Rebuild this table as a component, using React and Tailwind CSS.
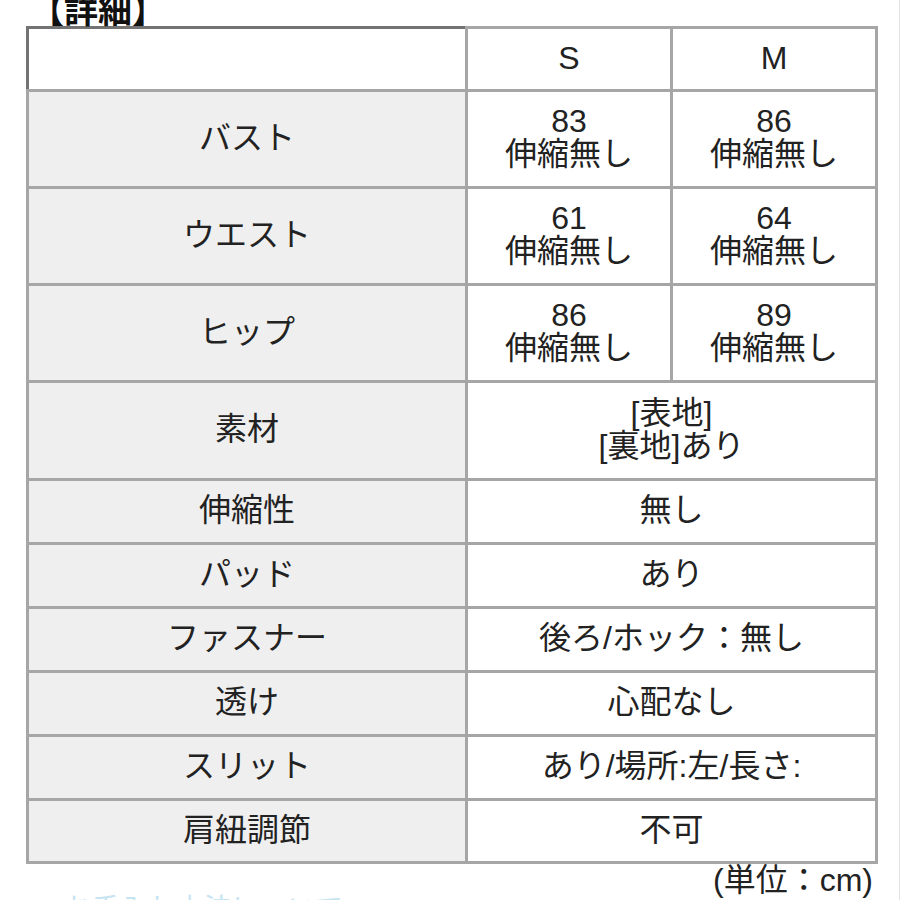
import React from "react";

const ROWS = [
  { label: "バスト", s: ["83", "伸縮無し"], m: ["86", "伸縮無し"], h: "h-[97px]" },
  { label: "ウエスト", s: ["61", "伸縮無し"], m: ["64", "伸縮無し"], h: "h-[97px]" },
  { label: "ヒップ", s: ["86", "伸縮無し"], m: ["89", "伸縮無し"], h: "h-[97px]" },
  { label: "素材", all: ["[表地]", "[裏地]あり"], h: "h-[98px]" },
  { label: "伸縮性", all: ["無し"], h: "h-[64px]" },
  { label: "パッド", all: ["あり"], h: "h-[64px]" },
  { label: "ファスナー", all: ["後ろ/ホック：無し"], h: "h-[64px]" },
  { label: "透け", all: ["心配なし"], h: "h-[64px]" },
  { label: "スリット", all: ["あり/場所:左/長さ:"], h: "h-[64px]" },
  { label: "肩紐調節", all: ["不可"], h: "h-[63px]" },
];

const cell = "border-[3px] border-[#a6a6a6] text-center align-middle p-0";

const Lines = ({ lines }) => (
  <div className="leading-[33px] -mt-[2px]">
    {lines.map((l, i) => (
      <div key={i}>{l}</div>
    ))}
  </div>
);

const App = () => {
  return (
    <div
      className="w-[900px] h-[900px] overflow-hidden bg-white text-[#222] border-r border-[#e2e2e2]"
      style={{ fontFamily: '"Liberation Sans", "Noto Sans CJK JP", sans-serif' }}
    >
      <div className="h-[26px] flex items-end pl-[30px]">
        <div className="text-[34px] font-bold leading-[34px] -mb-[2px] text-[#111]">【詳細】</div>
      </div>
      <table className="ml-[26px] w-[849px] border-collapse table-fixed text-[32px]">
        <colgroup>
          <col className="w-[439px]" />
          <col className="w-[205px]" />
          <col className="w-[205px]" />
        </colgroup>
        <tbody>
          <tr className="h-[63px]">
            <td className={`${cell} border-t-[#737373] border-l-[#737373]`}></td>
            <td className={cell}>
              <Lines lines={["S"]} />
            </td>
            <td className={cell}>
              <Lines lines={["M"]} />
            </td>
          </tr>
          {ROWS.map((r) => (
            <tr key={r.label} className={r.h}>
              <td className={`${cell} bg-[#efefef]`}>
                <Lines lines={[r.label]} />
              </td>
              {r.all ? (
                <td className={cell} colSpan={2}>
                  <Lines lines={r.all} />
                </td>
              ) : (
                <>
                  <td className={cell}>
                    <Lines lines={r.s} />
                  </td>
                  <td className={cell}>
                    <Lines lines={r.m} />
                  </td>
                </>
              )}
            </tr>
          ))}
        </tbody>
      </table>
      <div className="w-[873px] text-right text-[32px] leading-[34px] -mt-[1px]">
        (単位：cm)
      </div>
      <div className="pl-[36px] -mt-[2px] text-[28px] leading-[30px] text-[#c6e4f2]">
        ▲お手入れ方法について
      </div>
    </div>
  );
};

export default App;
